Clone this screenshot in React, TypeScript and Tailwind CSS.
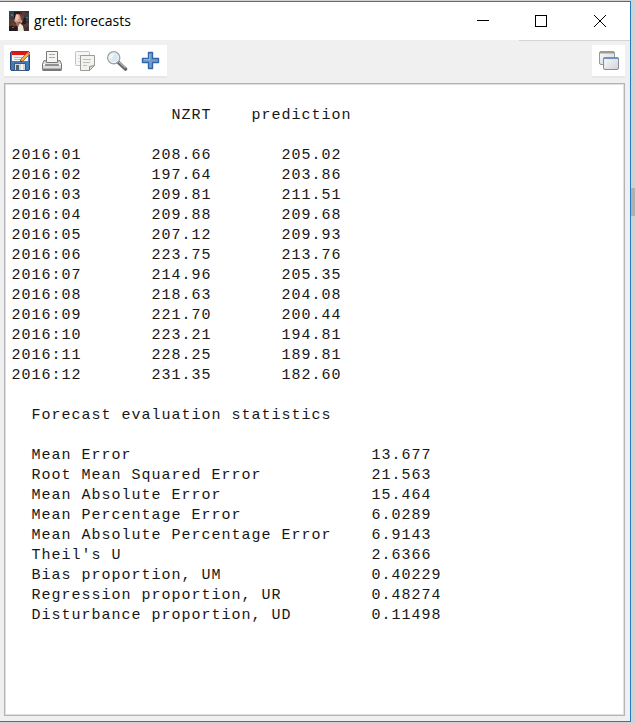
import React from "react";

const series: [string, string, string][] = [
  ["2016:01", "208.66", "205.02"],
  ["2016:02", "197.64", "203.86"],
  ["2016:03", "209.81", "211.51"],
  ["2016:04", "209.88", "209.68"],
  ["2016:05", "207.12", "209.93"],
  ["2016:06", "223.75", "213.76"],
  ["2016:07", "214.96", "205.35"],
  ["2016:08", "218.63", "204.08"],
  ["2016:09", "221.70", "200.44"],
  ["2016:10", "223.21", "194.81"],
  ["2016:11", "228.25", "189.81"],
  ["2016:12", "231.35", "182.60"],
];

const statistics: [string, string][] = [
  ["Mean Error", "13.677"],
  ["Root Mean Squared Error", "21.563"],
  ["Mean Absolute Error", "15.464"],
  ["Mean Percentage Error", "6.0289"],
  ["Mean Absolute Percentage Error", "6.9143"],
  ["Theil's U", "2.6366"],
  ["Bias proportion, UM", "0.40229"],
  ["Regression proportion, UR", "0.48274"],
  ["Disturbance proportion, UD", "0.11498"],
];

function AppIcon() {
  return (
    <svg width="20" height="20" viewBox="0 0 20 20">
      <path fill="#3c3434" d="M0 0h20v20H0z" />
      <path fill="#34444c" d="M0 0h5v7H0zM16 2h4v8h-4z" />
      <path fill="#5b3a30" d="M0 8h5v3H3v4H0zM13 1h3v4h-3zM15 12h5v4h-5z" />
      <path fill="#211b20" d="M5 1h6v3H7v4H5zM13 7h4v6h-4zM0 15h8v5H0z" />
      <path fill="#c99782" d="M7 3h3l2 3 2 2-1 4-3-1-2 2-3-3 1-3z" />
      <path fill="#edc5b0" d="M7 4h2l1 3-2 3-2-1z" />
      <path fill="#78402e" d="M11 3l4 2-1 5-2-1zM3 11l4 2-1 3-3-2z" />
      <path fill="#eee5dd" d="M9 13l2-1 3 3 1 5H9z" />
      <path fill="#a66c58" d="M8 11l3 1-2 4-2-2z" />
      <path fill="#547076" d="M2 3h2v2H2zM17 6h2v1h-2zM3 16h2v1H3z" />
    </svg>
  );
}

function SaveIcon() {
  return (
    <svg width="22" height="22" viewBox="0 0 22 22">
      <rect x="1.5" y="1.5" width="19" height="19" rx="1.5" fill="#4479b6" stroke="#204a80" />
      <path fill="#f5f5f3" d="M3 2h16v9H3z" />
      <path fill="#df1717" d="M3 1.5h16V5H3z" />
      <path stroke="#b9bcc0" d="M5 7.5h11M5 9.5h8" />
      <path fill="#d3d7d9" stroke="#385b80" d="M5.5 13.5h11v7h-11z" />
      <path fill="#53616c" d="M7 15h3v5H7z" />
      <path fill="#f3f5f6" d="M12 14h2v6h-2z" />
      <path d="M11 12l1-3 6-6 2 2-6 6z" fill="#edae45" stroke="#9f5a1e" strokeWidth=".8" />
      <path d="M18 3l1.4-1.3 2 2L20 5z" fill="#e98c71" />
      <path d="M11 12l.7-2 1.5 1.4z" fill="#333" />
    </svg>
  );
}

function PrintIcon() {
  return (
    <svg width="22" height="22" viewBox="0 0 22 22">
      <path d="M5.5 12V1.5h11V12" fill="#f5f5f3" stroke="#777976" />
      <path d="M8 4.5h6M8 7.5h6" stroke="#aaadaa" />
      <path d="M4.5 10.5H3L1.5 14v5.5h19V14L19 10.5h-1.5l-1 2h-11z" fill="#dedfdd" stroke="#777976" />
      <path d="M2 14.5h18" stroke="#fff" />
      <rect x="4" y="14" width="14" height="2" rx=".5" fill="#8f918f" />
      <path d="M2 18.5h18" stroke="#b0b3af" />
      <path d="M1.5 20.5h19" stroke="#777976" />
    </svg>
  );
}

function CopyIcon() {
  return (
    <svg width="22" height="22" viewBox="0 0 22 22">
      <rect x="1.5" y="1.5" width="14" height="14" rx="1" fill="#f6f6f5" stroke="#c2c3c1" />
      <path d="M4 5.5h8M4 8.5h4M4 11.5h3" stroke="#ddd" />
      <path d="M6.5 5.5h14v10l-5 5h-9z" fill="#f2f2f0" stroke="#9b9d99" strokeLinejoin="round" />
      <path d="M9 9.5h8M9 12.5h7M9 15.5h4" stroke="#bbbdb9" />
      <path d="M15.5 20.5v-4l5-1z" fill="#ddded9" stroke="#8f918d" strokeLinejoin="round" />
    </svg>
  );
}

function FindIcon() {
  return (
    <svg width="22" height="22" viewBox="0 0 22 22">
      <path d="M12.5 12.5l7 6.5" stroke="#626762" strokeWidth="3.6" strokeLinecap="round" />
      <path d="M13.5 12.5l5.5 5" stroke="#b1b4af" strokeWidth="1.2" strokeLinecap="round" />
      <circle cx="7.7" cy="7.7" r="6" fill="#d7e8f3" stroke="#a0a4a0" strokeWidth="1.5" />
      <circle cx="7.7" cy="7.7" r="4.8" fill="none" stroke="#f8fbfc" />
      <path d="M4 8c0-3 2.5-4.5 5-4-2 1-3 3-2.5 5z" fill="#fff" opacity=".8" />
    </svg>
  );
}

function AddIcon() {
  return (
    <svg width="22" height="22" viewBox="0 0 22 22">
      <path d="M9.5 2.5h4v6h6v4h-6v6h-4v-6h-6v-4h6z" fill="#729fcf" stroke="#3465a4" strokeWidth="1.4" strokeLinejoin="round" />
      <path d="M10.5 4v5.5H5" fill="none" stroke="#a5c5e5" strokeWidth=".7" />
    </svg>
  );
}

function WindowsIcon() {
  return (
    <svg width="22" height="22" viewBox="0 0 22 22">
      <defs>
        <linearGradient id="window-face" x2="1" y2="1">
          <stop stopColor="#fafafa" />
          <stop offset="1" stopColor="#d1d3d6" />
        </linearGradient>
      </defs>
      <rect x="1.5" y="1.5" width="15" height="13" rx="1.5" fill="url(#window-face)" stroke="#969896" />
      <path d="M2 2.5h14" stroke="#999c99" strokeWidth="2" />
      <rect x="5.5" y="7.5" width="15" height="12" rx="1.5" fill="url(#window-face)" stroke="#858b96" />
      <path d="M5.5 8.2h15" stroke="#7294c4" strokeWidth="1.7" />
    </svg>
  );
}

function TitleBar() {
  return (
    <header className="flex h-[38px] shrink-0 items-center bg-white">
      <div className="ml-[9px] h-5 w-5">
        <AppIcon />
      </div>
      <h1 className="ml-[5px] grow text-[14px] leading-5 font-normal tracking-[0.03px] whitespace-pre text-black">
        gretl: forecasts
      </h1>
      <svg width="160" height="38" viewBox="0 0 160 38" fill="none" stroke="#000" shapeRendering="crispEdges">
        <path d="M7 18.5h12" />
        <rect x="65.5" y="13.5" width="11" height="11" />
        <path d="M124 13l12 12M136 13l-12 12" shapeRendering="auto" />
      </svg>
    </header>
  );
}

function Toolbar() {
  return (
    <div className="flex h-[42px] shrink-0 justify-between bg-[#f0f0f0] pt-[4px] pr-[5px] pl-1">
      <div className="flex h-[33px] w-[163px] gap-[10.4px] border-b-2 border-[#e7e7e7] bg-white pt-[5px] pl-[5px]">
        <SaveIcon />
        <PrintIcon />
        <CopyIcon />
        <FindIcon />
        <AddIcon />
      </div>
      <div className="h-[33px] w-[33px] border-b-2 border-[#e7e7e7] bg-white pt-[5px] pl-[6px]">
        <WindowsIcon />
      </div>
    </div>
  );
}

function Report() {
  return (
    <main className="mr-[5px] mb-[5px] ml-1 grow border border-[#b3b3b8] bg-white pt-[22px] pl-[6.5px] font-['Liberation_Mono',monospace] text-[15px] leading-5 tracking-[0.9985px] whitespace-pre text-[#171717] shadow-[inset_0_0_0_1px_#dedee3]">
      <div className="mb-5 flex">
        <span className="w-[200px] text-right">NZRT</span>
        <span className="w-[140px] text-right">prediction</span>
      </div>
      {series.map(([month, actual, prediction]) => (
        <div className="flex" key={month}>
          <span className="w-[100px]">{month}</span>
          <span className="w-[100px] text-right">{actual}</span>
          <span className="w-[130px] text-right">{prediction}</span>
        </div>
      ))}
      <h2 className="my-5 pl-5">Forecast evaluation statistics</h2>
      {statistics.map(([label, value]) => (
        <div className="flex pl-5" key={label}>
          <span className="w-[340px]">{label}</span>
          <span>{value}</span>
        </div>
      ))}
    </main>
  );
}

export default function App() {
  return (
    <div className="flex h-[723px] w-[635px] overflow-hidden bg-[#d2d2d2] pt-px font-['Open_Sans','Noto_Sans',sans-serif]">
      <div className="flex h-[721px] w-[631px] flex-col border-t border-r border-b border-[#217bc0] bg-[#f0f0f0]">
        <TitleBar />
        <div className="ml-[519px] h-px shrink-0 bg-[#d5d5d5]" />
        <Toolbar />
        <Report />
      </div>
      <div className="mt-[187px] h-7 w-1 bg-[#b0b0b0]" />
    </div>
  );
}
